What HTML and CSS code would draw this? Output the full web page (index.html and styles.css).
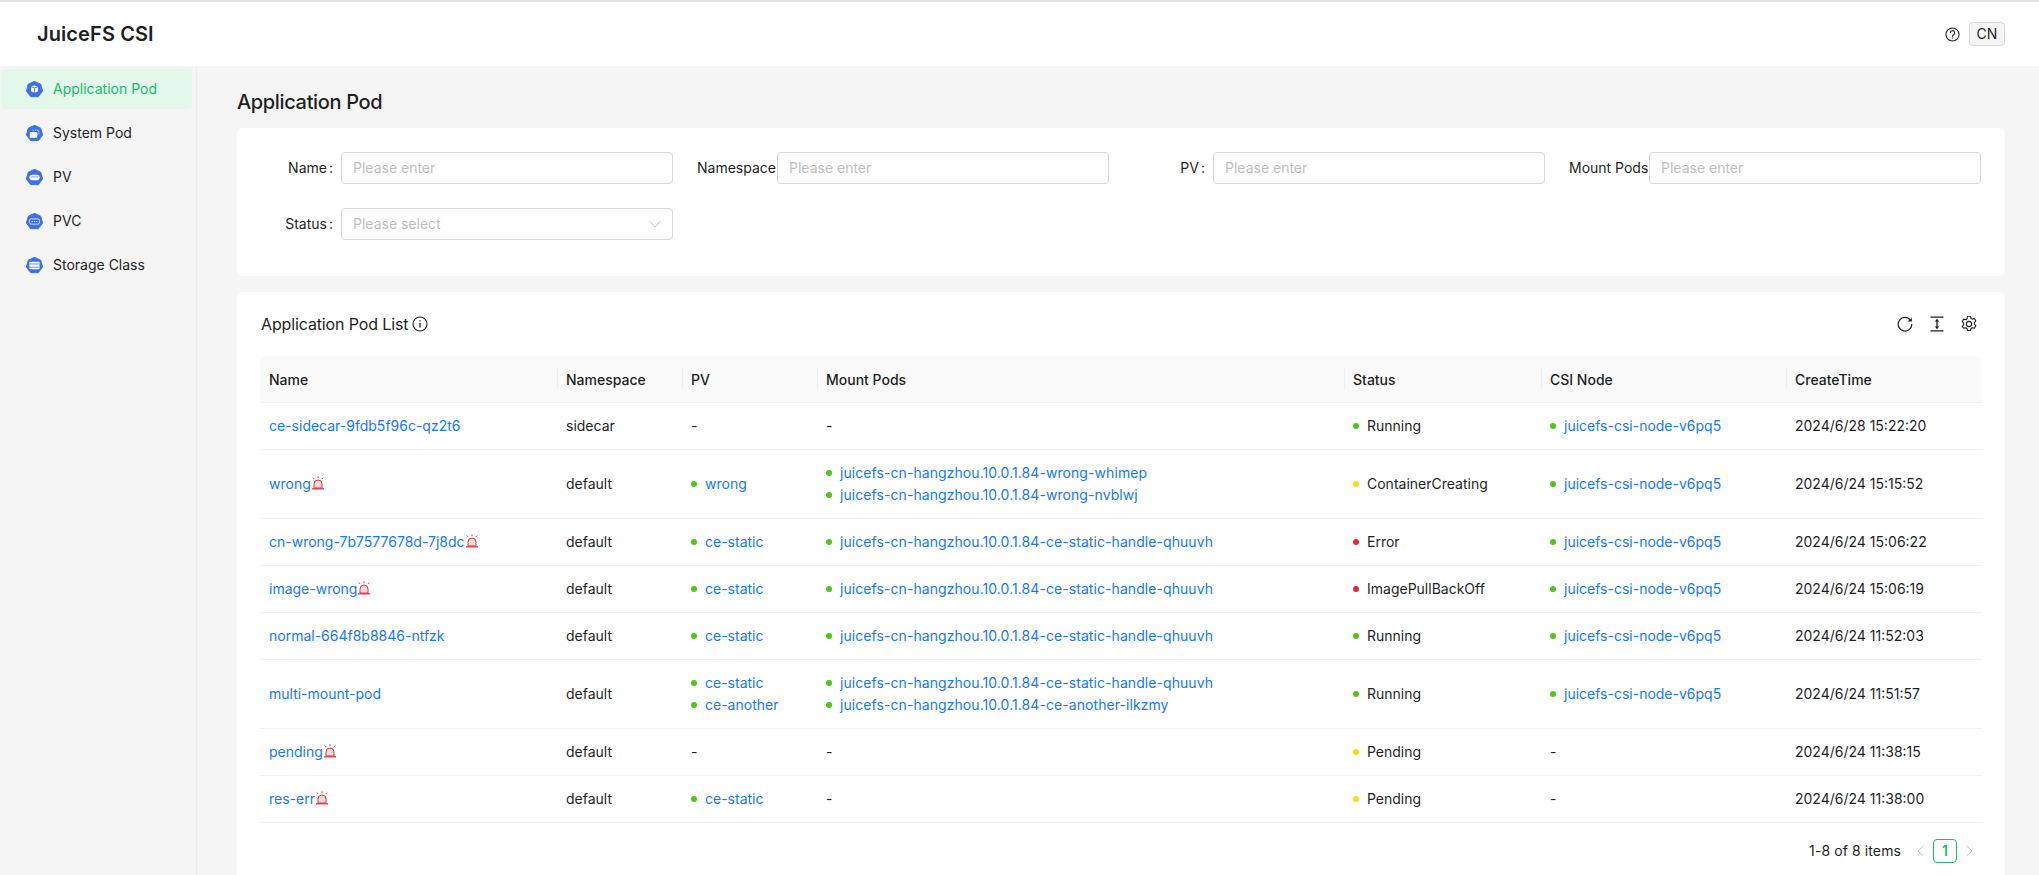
FILE: index.html
```html
<!DOCTYPE html>
<html lang="en">
<head>
<meta charset="utf-8">
<title>JuiceFS CSI</title>
<link rel="stylesheet" href="styles.css">
</head>
<body>
<svg class="defs" width="0" height="0" aria-hidden="true">
  <defs>
    <symbol id="alarm" viewBox="0 0 14 14">
      <path d="M3 12V8a4 4 0 0 1 8 0v4Z" fill="#fcdcdc" stroke="#e5343a" stroke-width="1"/>
      <path d="M1 12.800h12" stroke="#e5343a" stroke-width="1.300"/>
      <path d="M7 .3v1.900M1.800 1.600 3.200 3M12.200 1.600 10.800 3" stroke="#e5343a" stroke-width="1" fill="none"/>
    </symbol>
    <symbol id="hept" viewBox="0 0 18 18">
      <path d="M9 .3 15.600 3.400 17.600 10.600 13 16.600H5L.4 10.600 2.400 3.400Z" fill="#3e70e6" stroke="#3e70e6" stroke-linejoin="round"/>
    </symbol>
  </defs>
</svg>
<header class="topbar">
  <div class="brand">JuiceFS CSI</div>
  <div class="top-actions">
    <svg class="ico-help" viewBox="0 0 16 16" fill="none" stroke="#1f1f1f" stroke-width="1.100"><circle cx="8" cy="8" r="7"/><path d="M5.700 6.200A2.300 2.300 0 1 1 9.100 8.200c-.8.4-1.100.8-1.100 1.600" stroke-linecap="round"/><circle cx="8" cy="11.800" r=".7" fill="#1f1f1f" stroke="none"/></svg>
    <button class="lang" type="button">CN</button>
  </div>
</header>
<div class="layout">
  <nav class="sidebar">
    <a class="nav-item active"><svg class="nav-ico" viewBox="0 0 18 18"><use href="#hept"/><path d="M5.500 5.800 9 4.800l3.500 1-3.500 1.100Z" fill="#fff"/><path d="M5.300 6.700 8.600 7.700v4.600L5.300 11.200ZM12.700 6.700 9.400 7.700v4.600l3.300-1.100Z" fill="#fff"/></svg><span>Application Pod</span></a>
    <a class="nav-item"><svg class="nav-ico" viewBox="0 0 18 18"><use href="#hept"/><rect x="4" y="7.500" width="8" height="6" rx=".8" fill="#fff"/><path d="M7 5.500h6.500V11" fill="none" stroke="#fff" stroke-width=".8" stroke-dasharray="1.400 1"/></svg><span>System Pod</span></a>
    <a class="nav-item"><svg class="nav-ico" viewBox="0 0 18 18"><use href="#hept"/><rect x="3.600" y="6" width="10.800" height="6" rx="3" fill="#fff"/><path d="M5 8.300h8" stroke="#3e70e6" stroke-width=".6"/></svg><span>PV</span></a>
    <a class="nav-item"><svg class="nav-ico" viewBox="0 0 18 18"><use href="#hept"/><rect x="3.800" y="6.200" width="10.400" height="5.600" rx="1.600" fill="none" stroke="#fff" stroke-width=".8"/><path d="M6 9h6" stroke="#fff" stroke-width=".8" stroke-dasharray="1.400 1"/></svg><span>PVC</span></a>
    <a class="nav-item"><svg class="nav-ico" viewBox="0 0 18 18"><use href="#hept"/><rect x="3.600" y="5" width="10.800" height="8" rx=".8" fill="#fff"/><path d="M3.600 7.400h10.800M3.600 10.800h10.800" stroke="#3e70e6" stroke-width=".8"/></svg><span>Storage Class</span></a>
  </nav>
  <main class="content">
    <h1 class="page-title">Application Pod</h1>
    <section class="card filter">
      <div class="field"><label class="flabel">Name<i>:</i></label><div class="input">Please enter</div></div>
      <div class="field"><label class="flabel">Namespace</label><div class="input">Please enter</div></div>
      <div class="field"><label class="flabel">PV<i>:</i></label><div class="input">Please enter</div></div>
      <div class="field"><label class="flabel">Mount Pods</label><div class="input">Please enter</div></div>
      <div class="field"><label class="flabel">Status<i>:</i></label><div class="input select">Please select<svg class="chev-down" viewBox="0 0 12 12" fill="none" stroke="#bfbfbf" stroke-width="1"><path d="M1 3.500 6 9l5-5.500"/></svg></div></div>
    </section>
    <section class="card list">
      <div class="list-head">
        <div class="list-title">Application Pod List
          <svg class="ico-info" viewBox="0 0 16 16" fill="none" stroke="#1f1f1f" stroke-width="1.100"><circle cx="8" cy="8" r="7"/><path d="M8 7v4.600" stroke-width="1.300"/><circle cx="8" cy="4.800" r=".7" fill="#1f1f1f" stroke="none"/></svg>
        </div>
        <div class="tools">
          <svg class="tool" viewBox="0 0 16 16" fill="none" stroke="#1f1f1f" stroke-width="1.200"><path d="M13.700 4.500A6.800 6.800 0 1 0 14.800 8"/><path d="M14.800 1.500v4h-4Z" stroke="none" fill="#1f1f1f"/></svg>
          <svg class="tool" viewBox="0 0 16 16" fill="none" stroke="#1f1f1f" stroke-width="1.300"><path d="M1.500 1.200h13M1.500 14.800h13M8 3.500v9"/><path d="M5.800 5.400 8 3l2.200 2.400ZM5.800 10.600 8 13l2.200-2.400Z" fill="#1f1f1f" stroke="none"/></svg>
          <svg class="tool" viewBox="0 0 16 16" fill="none" stroke="#1f1f1f" stroke-width="1.100"><path d="M6.500.6h3l.5 2.100 1.200.7 2.100-.6 1.500 2.600-1.500 1.500v1.600l1.500 1.500-1.500 2.600-2.100-.6-1.200.7-.5 2.100h-3l-.5-2.100-1.200-.7-2.100.6L1.200 10.600l1.500-1.500V7.500L1.200 6 2.700 3.400l2.100.6L6 3.300Z" stroke-linejoin="round" transform="translate(0 -.3)"/><circle cx="8" cy="8" r="2.600"/></svg>
        </div>
      </div>
      <table class="grid">
        <colgroup>
          <col class="c1"><col class="c2"><col class="c3"><col class="c4"><col class="c5"><col class="c6"><col class="c7">
        </colgroup>
        <thead>
          <tr><th>Name</th><th>Namespace</th><th>PV</th><th>Mount Pods</th><th>Status</th><th>CSI Node</th><th>CreateTime</th></tr>
        </thead>
        <tbody>
          <tr>
            <td><a>ce-sidecar-9fdb5f96c-qz2t6</a></td><td>sidecar</td><td>-</td><td>-</td>
            <td><span class="st"><i class="dot green"></i>Running</span></td>
            <td><span class="st"><i class="dot green"></i><a>juicefs-csi-node-v6pq5</a></span></td>
            <td>2024/6/28 15:22:20</td>
          </tr>
          <tr>
            <td><span class="nm"><a>wrong</a><svg class="alarm"><use href="#alarm"/></svg></span></td><td>default</td>
            <td><span class="st"><i class="dot green"></i><a>wrong</a></span></td>
            <td class="mp"><span class="st"><i class="dot green"></i><a>juicefs-cn-hangzhou.10.0.1.84-wrong-whimep</a></span><span class="st"><i class="dot green"></i><a>juicefs-cn-hangzhou.10.0.1.84-wrong-nvblwj</a></span></td>
            <td><span class="st"><i class="dot gold"></i>ContainerCreating</span></td>
            <td><span class="st"><i class="dot green"></i><a>juicefs-csi-node-v6pq5</a></span></td>
            <td>2024/6/24 15:15:52</td>
          </tr>
          <tr>
            <td><span class="nm"><a>cn-wrong-7b7577678d-7j8dc</a><svg class="alarm"><use href="#alarm"/></svg></span></td><td>default</td>
            <td><span class="st"><i class="dot green"></i><a>ce-static</a></span></td>
            <td class="mp"><span class="st"><i class="dot green"></i><a>juicefs-cn-hangzhou.10.0.1.84-ce-static-handle-qhuuvh</a></span></td>
            <td><span class="st"><i class="dot red"></i>Error</span></td>
            <td><span class="st"><i class="dot green"></i><a>juicefs-csi-node-v6pq5</a></span></td>
            <td>2024/6/24 15:06:22</td>
          </tr>
          <tr>
            <td><span class="nm"><a>image-wrong</a><svg class="alarm"><use href="#alarm"/></svg></span></td><td>default</td>
            <td><span class="st"><i class="dot green"></i><a>ce-static</a></span></td>
            <td class="mp"><span class="st"><i class="dot green"></i><a>juicefs-cn-hangzhou.10.0.1.84-ce-static-handle-qhuuvh</a></span></td>
            <td><span class="st"><i class="dot red"></i>ImagePullBackOff</span></td>
            <td><span class="st"><i class="dot green"></i><a>juicefs-csi-node-v6pq5</a></span></td>
            <td>2024/6/24 15:06:19</td>
          </tr>
          <tr>
            <td><a>normal-664f8b8846-ntfzk</a></td><td>default</td>
            <td><span class="st"><i class="dot green"></i><a>ce-static</a></span></td>
            <td class="mp"><span class="st"><i class="dot green"></i><a>juicefs-cn-hangzhou.10.0.1.84-ce-static-handle-qhuuvh</a></span></td>
            <td><span class="st"><i class="dot green"></i>Running</span></td>
            <td><span class="st"><i class="dot green"></i><a>juicefs-csi-node-v6pq5</a></span></td>
            <td>2024/6/24 11:52:03</td>
          </tr>
          <tr>
            <td><a>multi-mount-pod</a></td><td>default</td>
            <td><span class="st"><i class="dot green"></i><a>ce-static</a></span><span class="st"><i class="dot green"></i><a>ce-another</a></span></td>
            <td class="mp"><span class="st"><i class="dot green"></i><a>juicefs-cn-hangzhou.10.0.1.84-ce-static-handle-qhuuvh</a></span><span class="st"><i class="dot green"></i><a>juicefs-cn-hangzhou.10.0.1.84-ce-another-ilkzmy</a></span></td>
            <td><span class="st"><i class="dot green"></i>Running</span></td>
            <td><span class="st"><i class="dot green"></i><a>juicefs-csi-node-v6pq5</a></span></td>
            <td>2024/6/24 11:51:57</td>
          </tr>
          <tr>
            <td><span class="nm"><a>pending</a><svg class="alarm"><use href="#alarm"/></svg></span></td><td>default</td><td>-</td><td>-</td>
            <td><span class="st"><i class="dot gold"></i>Pending</span></td>
            <td>-</td>
            <td>2024/6/24 11:38:15</td>
          </tr>
          <tr>
            <td><span class="nm"><a>res-err</a><svg class="alarm"><use href="#alarm"/></svg></span></td><td>default</td>
            <td><span class="st"><i class="dot green"></i><a>ce-static</a></span></td><td>-</td>
            <td><span class="st"><i class="dot gold"></i>Pending</span></td>
            <td>-</td>
            <td>2024/6/24 11:38:00</td>
          </tr>
        </tbody>
      </table>
      <div class="pager">
        <span class="total">1-8 of 8 items</span>
        <svg class="pg-arrow" viewBox="0 0 12 12" fill="none" stroke="#bfbfbf" stroke-width="1"><path d="M8.500 1 3 6l5.500 5"/></svg>
        <span class="page-num">1</span>
        <svg class="pg-arrow" viewBox="0 0 12 12" fill="none" stroke="#bfbfbf" stroke-width="1"><path d="M3.500 1 9 6l-5.500 5"/></svg>
      </div>
    </section>
  </main>
</div>
</body>
</html>
```
FILE: styles.css
```css
* { box-sizing: border-box; }
html, body { margin: 0; height: 100%; overflow: hidden; }
body {
  font-family: Inter, "Liberation Sans", sans-serif;
  font-size: 14px;
  line-height: 22px;
  color: #1f1f1f;
  background: #f5f5f5;
  display: flex;
  flex-direction: column;
}
.defs { position: absolute; }
.topbar {
  height: 66px;
  flex: none;
  background: #fff;
  border-top: 2px solid #e3e3e3;
  display: flex;
  align-items: center;
  justify-content: space-between;
  padding: 0 34px 0 37px;
}
.brand { font-size: 20px; font-weight: 600; letter-spacing: .1px; }
.top-actions { display: flex; align-items: center; gap: 9px; }
.ico-help { width: 15px; height: 15px; }
.lang {
  width: 36px; height: 24px; padding: 0;
  font: inherit; color: inherit;
  background: #f5f5f5;
  border: 1px solid #d9d9d9;
  border-radius: 4px;
}
.layout { flex: 1; display: flex; min-height: 0; }
.sidebar {
  width: 197px; flex: none;
  border-right: 1px solid #ececec;
  padding: 3px 4px 0 1px;
  display: flex; flex-direction: column; gap: 4px;
}
.nav-item {
  height: 40px; display: flex; align-items: center;
  padding-left: 25px; gap: 10px; border-radius: 4px;
}
.nav-item.active { background: #e3f8ea; color: #1fb86f; }
.nav-ico { width: 17px; height: 17px; flex: none; }
.content { flex: 1; min-width: 0; padding: 0 34px 0 40px; }
.page-title {
  margin: 0; height: 62px;
  font-size: 20px; font-weight: 500; line-height: 32px;
  letter-spacing: -.35px;
  padding-top: 20px;
}
.card { background: #fff; border-radius: 6px; }
.filter {
  height: 148px;
  padding: 24px 24px 0;
  display: grid;
  grid-template-columns: repeat(4, 412px);
  column-gap: 24px;
  row-gap: 24px;
  align-content: start;
  margin-bottom: 16px;
}
.field { display: flex; height: 32px; align-items: center; }
.flabel { width: 80px; flex: none; text-align: right; white-space: nowrap; padding-right: 2px; }
.flabel i { font-style: normal; margin: 0 6px 0 2px; }
.input {
  flex: 1; height: 32px;
  border: 1px solid #d9d9d9; border-radius: 4px;
  padding: 0 11px; line-height: 30px; color: #bfbfbf;
}
.select { display: flex; align-items: center; justify-content: space-between; }
.chev-down { width: 12px; height: 12px; }
.list { padding: 0 23px 0 23px; height: 700px; }
.list-head {
  height: 64px;
  display: flex; align-items: center; justify-content: space-between;
}
.list-title { font-size: 16px; display: flex; align-items: center; gap: 4px; padding-left: 1px; letter-spacing: -.13px; }
.ico-info { width: 16px; height: 16px; }
.tools { display: flex; gap: 16px; padding-right: 5px; }
.tool { width: 16px; height: 16px; }
.grid { width: 1722px; table-layout: fixed; border-collapse: separate; border-spacing: 0; }
.c1 { width: 297px; } .c2 { width: 125px; } .c3 { width: 135px; } .c4 { width: 527px; }
.c5 { width: 197px; } .c6 { width: 245px; } .c7 { width: 196px; }
.grid th {
  height: 47px; padding: 1px 9px 0;
  background: #fafafa; font-weight: 500; text-align: left;
  border-bottom: 1px solid #f0f0f0;
  position: relative;
}
.grid th:first-child { border-top-left-radius: 8px; }
.grid th:last-child { border-top-right-radius: 8px; }
.grid th + th::before {
  content: ""; position: absolute; left: 0; top: 12px; height: 22px;
  width: 1px; background: #f0f0f0;
}
.grid td {
  height: 47px; padding: 12px 9px; border-bottom: 1px solid #f0f0f0;
  white-space: nowrap;
}
.grid a { color: #1677ff; }
.mp a { letter-spacing: .07px; }
.st { display: flex; align-items: center; }
.dot { width: 6px; height: 6px; border-radius: 50%; margin-right: 8px; flex: none; }
.green { background: #52c41a; }
.gold { background: #fadb14; }
.red { background: #f5222d; }
.nm { display: inline-flex; align-items: center; }
.alarm { width: 14px; height: 14px; margin-top: -2px; }
.pager {
  display: flex; align-items: center; justify-content: flex-end;
  margin-top: 16px; height: 24px; padding-right: 7px;
}
.total { margin-right: 14px; letter-spacing: .1px; }
.pg-arrow { width: 12px; height: 12px; }
.page-num {
  width: 24px; height: 24px; margin: 0 6px;
  border: 1px solid #1fb86f; border-radius: 4px;
  color: #1fb86f; font-weight: 600; text-align: center; line-height: 22px;
}
```
